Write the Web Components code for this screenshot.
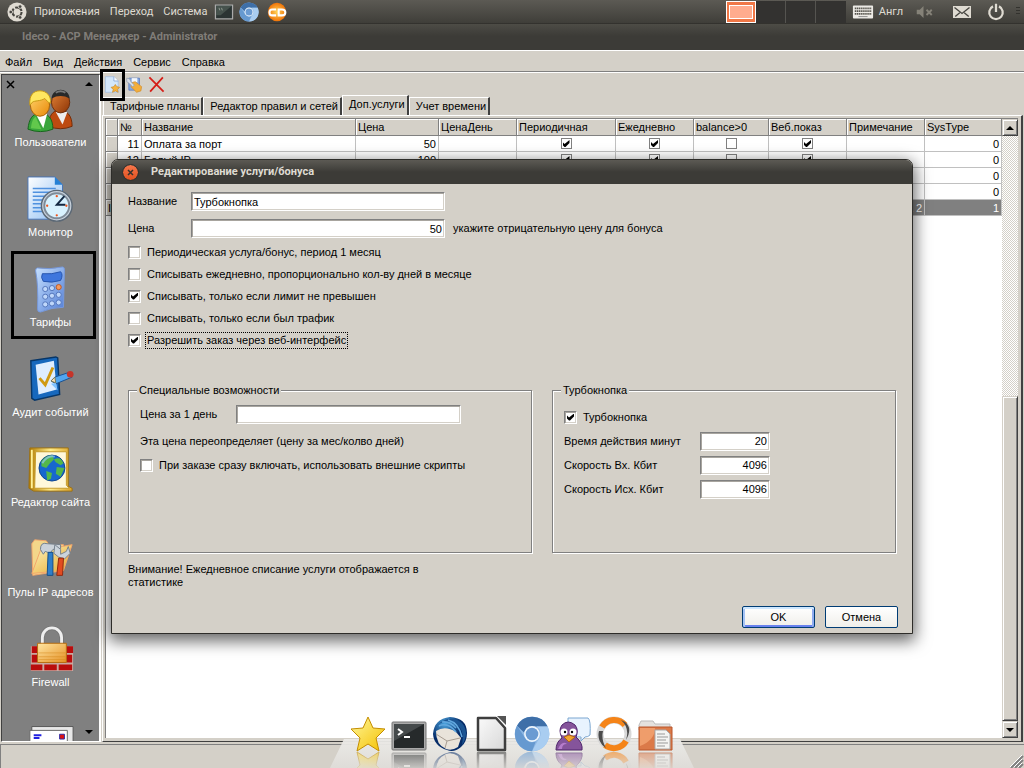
<!DOCTYPE html>
<html lang="ru">
<head>
<meta charset="utf-8">
<title>Ideco - ACP Менеджер</title>
<style>
  html, body { height: 100%; }
  body {
    --face: #d4d0c8;
    --shade: #808080;
    --dark: #404040;
    margin: 0;
    position: relative;
    display: flex;
    flex-direction: column;
    overflow: hidden;
    background: var(--face);
    color: #000;
    font: 11px/13px "Liberation Sans", Arial, sans-serif;
  }
  main {
    flex: 1;
    min-height: 0;
    display: flex;
  }
  .work {
    flex: 1;
    min-width: 0;
    display: flex;
    flex-direction: column;
    padding: 0 1px;
  }
</style>
</head>
<body>
  <desktop-panel></desktop-panel>
  <title-bar>Ideco - ACP Менеджер - Administrator</title-bar>
  <menu-bar items="Файл,Вид,Действия,Сервис,Справка"></menu-bar>
  <main>
    <side-bar>
      <side-item icon="users">Пользователи</side-item>
      <side-item icon="monitor">Монитор</side-item>
      <side-item icon="calc" marked>Тарифы</side-item>
      <side-item icon="audit">Аудит событий</side-item>
      <side-item icon="site">Редактор сайта</side-item>
      <side-item icon="tools">Пулы IP адресов</side-item>
      <side-item icon="firewall">Firewall</side-item>
      <side-item icon="mails"></side-item>
    </side-bar>
    <div class="work">
      <tool-bar></tool-bar>
      <tab-strip tabs="Тарифные планы,Редактор правил и сетей,Доп.услуги,Учет времени" active="2"></tab-strip>
      <tab-panel><data-grid></data-grid></tab-panel>
    </div>
  </main>
  <status-bar></status-bar>
  <launcher-dock></launcher-dock>
  <service-dialog></service-dialog>

<script>
const icons = {
  ubuntu: `<circle cx="12" cy="12" r="11.500" fill="#dfdbd2"/><circle cx="12" cy="12" r="5.500" fill="none" stroke="#45443f" stroke-width="2.500" stroke-dasharray="9.500 2"/><g fill="#45443f" stroke="#dfdbd2"><circle cx="4.500" cy="12" r="2.200"/><circle cx="15.700" cy="5.500" r="2.200"/><circle cx="15.700" cy="18.500" r="2.200"/></g>`,
  term: `<rect x="1" y="3" width="22" height="18" fill="#aaa"/><rect x="2.500" y="4.500" width="19" height="15" fill="#2b3433"/><path d="M2.500 4.500h19L8 16H2.500z" fill="#46524d"/><path d="M6 7l1 3M9 7l1 3" stroke="#9aa59a" fill="none"/>`,
  chromium: `<circle cx="12" cy="12" r="11.500" fill="#8fb8e4"/><path d="M2 6.500A11.500 11.500 0 0122.500 7H12a5.500 5.500 0 00-5.300 4z" fill="#3e6fa8"/><path d="M22.500 7A11.500 11.500 0 0112 23.500l4.800-8.700A5.500 5.500 0 0015 7z" fill="#a9cdf1"/><path d="M2 6.500A11.500 11.500 0 0012 23.500l2.500-6.500A5.500 5.500 0 017 14z" fill="#6699d0"/><circle cx="12" cy="12" r="5.300" fill="#eef5fc"/><circle cx="12" cy="12" r="4.200" fill="#6b9bd2"/>`,
  cd: `<defs><radialGradient id="g"><stop offset="0" stop-color="#ffd45a"/><stop offset="1" stop-color="#f07408"/></radialGradient></defs><circle cx="12" cy="12" r="11" fill="url(#g)"/><path d="M11 9H6q-3 0-3 3.500T6 16h5M14 9h4q4 0 4 3.500T18 16h-4z" fill="none" stroke="#fff" stroke-width="2.500"/>`,
  keyboard: `<rect x="1" y="5" width="22" height="14" rx="1" fill="#eceae5"/><path d="M3 8h18M3 11h18M3 14h18" stroke="#55534c" stroke-width="2" stroke-dasharray="1.500 .6"/><path d="M7 17h10" stroke="#888"/>`,
  sound: `<path d="M1 9h4l5-5v16l-5-5H1z" fill="#858278"/><path d="M14 9l7 7m0-7l-7 7" stroke="#858278" stroke-width="2.500"/>`,
  mail: `<path d="M0 4h24v16H0z" fill="#dfdbd2"/><path d="M2 6l10 8 10-8M3 18l6-5m12 5l-6-5" fill="none" stroke="#45443f" stroke-width="1.800"/>`,
  power: `<path d="M8 4.500a9 9 0 108 0" fill="none" stroke="#dfdbd2" stroke-width="3"/><path d="M12 1v11" stroke="#dfdbd2" stroke-width="3"/>`,
  users: `<defs><linearGradient id="a" x2="1" y2="1"><stop stop-color="#ffd36b"/><stop offset="1" stop-color="#e88908"/></linearGradient><linearGradient id="b" x2="1" y2="1"><stop stop-color="#e08138"/><stop offset="1" stop-color="#8d3405"/></linearGradient></defs>
    <path d="M22 42c1-12 5-16 11-17 9 0 14 6 14 17q-12 5-25 0z" fill="#bd4a10" stroke="#732a05"/><path d="M30 27h12l-5 13z" fill="#eee"/><ellipse cx="35" cy="17" rx="9.500" ry="11" fill="url(#b)" stroke="#6b2a07"/><path d="M25.500 13C27 1 43 1 44.500 13q-9.500-5-19 0z" fill="#292929"/><path d="M30 7q5-3 10 0" stroke="#777" stroke-width="2" fill="none"/>
    <path d="M1 45c1-11 5-16 12-17 9 0 14 6 14 17q-13 5-26 0z" fill="#39a53c" stroke="#146319"/><path d="M9 29h12l-4 15z" fill="#fff"/><path d="M4 44c1-7 2-10 5-12l6 13z" fill="#62c84c"/><ellipse cx="13.500" cy="20" rx="10" ry="11.500" fill="url(#a)" stroke="#a86105"/><path d="M3 20C2 9 7 5 13.500 5s12 5 11 13c-3-1-4-3-6-5-4 3-11 2-13 4z" fill="#ffe760" stroke="#c49712"/>`,
  monitor: `<defs><linearGradient id="a" x2="1" y2="1"><stop stop-color="#fff"/><stop offset="1" stop-color="#8cbdf3"/></linearGradient></defs><path d="M1 1h28l8 8v36H1z" fill="url(#a)" stroke="#4774b5"/><path d="M29 1v8h8z" fill="#2580d5"/><path d="M6 13h24M6 17h18M6 21h15M6 25h12M6 29h12M6 33h14M6 37h14" stroke="#4f91df" stroke-width="1.500"/><circle cx="31" cy="31" r="16" fill="#c7d1dc" stroke="#5b6875" stroke-width="1.500"/><circle cx="31" cy="31" r="13" fill="#d8f2ff" stroke="#7e8b98" stroke-width="2"/><path d="M39 21l-8 9h9" fill="none" stroke="#142943" stroke-width="2"/><g fill="#f0551c"><circle cx="31" cy="21" r="1.200"/><circle cx="31" cy="41" r="1.200"/><circle cx="21" cy="31" r="1.200"/><circle cx="41" cy="31" r="1.200"/></g>`,
  calc: `<defs><linearGradient id="a" x2="1" y2="1"><stop stop-color="#c7e1ff"/><stop offset="1" stop-color="#527ed5"/></linearGradient></defs><path d="M11 2q13 2 26-1 2 0 2 3l-1 39q-12 0-24 5-3 0-3-3Q12 20 9 5q0-3 2-3z" fill="url(#a)" stroke="#7699dc"/><path d="M16 8q10 1 19-2 3 3 0 9-9 3-18 1-3-4-1-8z" fill="#3e76dd" stroke="#2453ac"/><g fill="#bfd7fa" stroke="#5274ba"><circle cx="19" cy="24" r="2.700"/><circle cx="26" cy="23" r="2.700"/><circle cx="19" cy="32" r="2.700"/><circle cx="26" cy="31" r="2.700"/><circle cx="33" cy="30" r="2.700"/><circle cx="19" cy="40" r="2.700"/><circle cx="26" cy="39" r="2.700"/><circle cx="33" cy="38" r="2.700"/></g><circle cx="33" cy="22" r="2.700" fill="#f69a5c" stroke="#b95928"/>`,
  audit: `<path d="M4 5l26-4 2 1 2 38-26 6-3-2z" fill="#1768bd" stroke="#083667" stroke-width="1.500"/><path d="M9 9l19-4 3 30-19 5z" fill="#deedff"/><path d="M13 23l6 7 8-18" fill="none" stroke="#d09a12" stroke-width="3"/><path d="M25 26l4-4 15-5 3 5-17 7z" fill="#51a5ef" stroke="#174f91"/><path d="M25 26l4-4 1 6z" fill="#f9ddb2" stroke="#775"/><circle cx="45" cy="19" r="3.500" fill="#c63429"/><path d="M25 29l7 7-2-8z" fill="#7dc1ff"/>`,
  site: `<defs><linearGradient id="a" x2="1"><stop stop-color="#b17a00"/><stop offset=".5" stop-color="#ffed8b"/><stop offset="1" stop-color="#dba32b"/></linearGradient></defs><path d="M3 2h40v40l4 2v3H7l-5-3z" fill="url(#a)" stroke="#9c7011"/><path d="M9 6h32v35l3 3H8z" fill="#fff8da" stroke="#c59b2b"/><path d="M5 4v40" stroke="#fff198" stroke-width="2"/><circle cx="26" cy="23" r="13.500" fill="#1767ce" stroke="#0d438f"/><path d="M15 16q5-7 12-6l1 4-4 4-4 5-5-2zM28 14q7-4 10 4l-3 2-5-3zM20 26l6 2-1 6-4 2zM31 22l8 1-4 9-5-3z" fill="#54b74a"/><path d="M16 18q5-9 13-7" stroke="#93c8fa" fill="none" stroke-width="2" opacity=".7"/>`,
  tools: `<defs><linearGradient id="a" x2="1" y2="1"><stop stop-color="#fff4c1"/><stop offset="1" stop-color="#e5a929"/></linearGradient></defs><path d="M5 8l3-4 12 1 3 4h15v27L6 41z" fill="#f3d68a" stroke="#f1a46a"/><path d="M5 39l9-24 33-6-9 27z" fill="url(#a)" stroke="#f1a46a"/><path d="M14 14q0-8 7-6l14 1v4l-8 1-3 4-5-2-2 3z" fill="#cbd2d9" stroke="#707e8d"/><path d="M22 17h5v24h-6z" fill="#2f7fc9" stroke="#134c87"/><path d="M29 9l6 5v5l6-3 2-5 2 7-6 6-6-2-5-4z" fill="#cbd4dc" stroke="#75818c"/><path d="M33 23h5l-1 18h-6z" fill="#e24b20" stroke="#8e270d"/>`,
  firewall: `<defs><linearGradient id="a" x2="1" y2="1"><stop stop-color="#ffe6a3"/><stop offset="1" stop-color="#e59125"/></linearGradient></defs><path d="M4 21h44v26H4z" fill="#c9a8a0"/><g fill="#b90d0d"><path d="M5 21h6v7H5zM41 21h7v7h-7zM5 30h6v8H5zM41 30h6v8h-6zM4 40h12v6H4zM18 40h13v6H18zM33 40h14v6H33z"/></g><path d="M16 20V12a10 10 0 0120 0v8" fill="none" stroke="#777" stroke-width="5"/><path d="M16 20V12a10 10 0 0120 0v8" fill="none" stroke="#eee" stroke-width="3"/><path d="M11 18h30v20H11z" fill="url(#a)" stroke="#b66b0d"/><path d="M12 28h28M12 32h28M12 35h28" stroke="#d48719" opacity=".5"/>`,
  mails: `<path d="M5 11h43v30H5z" fill="#e8e8e8" stroke="#555"/><path d="M3 15h39v30H3z" fill="#fff" stroke="#666"/><path d="M7 20h8M7 23h6" stroke="#2020df" stroke-width="2"/><path d="M34 19h5v5h-5z" fill="#d11" stroke="#2a2aaa"/>`,
  add: `<path d="M2 1h12l6 6v16H2z" fill="#d3e7fb" stroke="#9fbce6"/><path d="M14 1v6h6" fill="#fff" stroke="#7198d0"/><path d="M16 12l2 3 4 1-3 3 1 4-4-2-4 2 1-4-3-3 4-1z" fill="#f5b23e" stroke="#c98a28"/>`,
  edit: `<path d="M4 3h15v17H4z" fill="#84a9e2" stroke="#4f72bb"/><path d="M8 3h8v6H8z" fill="#f4f7fc"/><path d="M9 9l4-1 9 7-1 6-6 2-8-8z" fill="#f3ae3b" stroke="#d18c2c"/><path d="M1 3l4 1 2 4 5 5-3 2-5-5-3-2z" fill="#d8dde5" stroke="#8d9aad"/>`,
  remove: `<path d="M2 2l20 20M21 2L3 22" stroke="#d51e18" stroke-width="2.500"/>`,
  star: `<defs><linearGradient id="g" y2="1"><stop stop-color="#fff79b"/><stop offset="1" stop-color="#f4c000"/></linearGradient></defs><path d="M18 1l5 11 12 1-9 9 3 13-11-7-11 7 3-13L1 13l12-1z" fill="url(#g)" stroke="#c38d00"/>`,
  shell: `<rect x="1" y="6" width="34" height="28" rx="1" fill="#aaa" stroke="#777"/><rect x="3" y="8" width="30" height="24" fill="#262a2b"/><path d="M3 8h30L3 25z" fill="#454a4b"/><path d="M7 13l4 3-4 3M13 21h6" fill="none" stroke="#fff" stroke-width="2"/>`,
  bird: `<defs><radialGradient id="g" cx=".35" cy=".2"><stop stop-color="#4ba3dd"/><stop offset="1" stop-color="#052b68"/></radialGradient></defs><path d="M18 1q17 1 17 16 0 9-6 14-7 6-14 3Q2 30 1 18 2 3 18 1z" fill="url(#g)"/><path d="M4 15q9-6 20 1l5 6-3 9q-6 4-12 2Q4 29 4 15z" fill="#e9e3da"/><path d="M4 18l11 7 13-3M15 25l-2 7" fill="none" stroke="#a89d92"/><path d="M2 14Q10 1 24 8q9 6 6 21 8-12 0-22Q14-4 2 14z" fill="#1c5593"/><path d="M7 10q9-4 17 6m-8-12q11 3 14 17M10 6q8-1 14 6" fill="none" stroke="#62a8df" stroke-width="1.500"/>`,
  sheet: `<defs><linearGradient id="g" y2="1"><stop stop-color="#fafafa"/><stop offset="1" stop-color="#d8d8d8"/></linearGradient></defs><path d="M5 2h18l9 10v22H5z" fill="url(#g)" stroke="#3e3e3e" stroke-width="2.500" stroke-linejoin="round"/><path d="M24 0h9v9z" fill="#555"/>`,
  pidgin: `<path d="M13 2h20q3 2 2 17-2 2-5 2l-4 4v-4H13z" fill="#e8f3fe" stroke="#7ba6d0"/><path d="M1 34q0-8 6-12-4-8 0-13 6-6 13 0 4 5 1 12 7 6 6 13z" fill="#85549b" stroke="#4f246b"/><circle cx="9" cy="16" r="3.500" fill="#fff"/><circle cx="18" cy="16" r="3.500" fill="#fff"/><circle cx="10" cy="16" r="1.200"/><circle cx="17" cy="16" r="1.200"/><path d="M9 21l5-2 6 2-6 5z" fill="#f3a22e" stroke="#ad6712"/><path d="M3 33q4-9 9-5-5 0-5 5z" fill="#b57ccb"/>`,
  ring: `<circle cx="18" cy="18" r="14" fill="none" stroke="#d8d8d8" stroke-width="7"/><path d="M6 11A14 14 0 0129 9M30 25A14 14 0 019 29" fill="none" stroke="#f58418" stroke-width="6"/><path d="M3 15a15 15 0 007 17q-5-8-3-17zM25 4q9 8 5 20 7-12-1-18z" fill="#4b4b4b"/>`,
  folder: `<path d="M2 9l2-4h12l2 3h15v6H2z" fill="#e4e1de" stroke="#bbb"/><path d="M2 11h33v23H2z" fill="#db7a49" stroke="#b9572c"/><path d="M3 12h15q0 12-15 18z" fill="#ef9d6b"/><path d="M18 14h11l4 4v15H18z" fill="#f4f4f2" stroke="#aaa"/><path d="M20 18h8M20 21h11M20 24h9M20 27h11M20 30h8" stroke="#999"/>`,
};

const buttonReset = `
  button {
    border: 0;
    padding: 0;
    background: none;
    color: inherit;
    font: inherit;
  }
`;

const define = (name, render) => {
  customElements.define(name, class extends HTMLElement {
    constructor() {
      super();
      this.attachShadow({ mode: "open" });
    }

    connectedCallback() {
      this.shadowRoot.innerHTML = render(this);
    }
  });
};

const list = (el, name) => el.getAttribute(name).split(",");

define("svg-icon", (el) => `
  <style>
    :host { display: block; flex: none; width: var(--icon, 20px); height: var(--icon, 20px); }
    svg { display: block; width: 100%; height: 100%; }
  </style>
  <svg viewBox="0 0 ${el.getAttribute("box") || 24} ${el.getAttribute("box") || 24}" aria-hidden="true">${icons[el.getAttribute("name")]}</svg>
`);

define("desktop-panel", () => `
  <style>
    ${buttonReset}
    :host {
      box-sizing: border-box;
      height: 24px;
      display: flex;
      justify-content: space-between;
      background: linear-gradient(#5c5a54, #3f3e39);
      border-bottom: 1px solid #33322e;
      color: #dfdbd2;
      font: 11px/22px Roboto, "Noto Sans", sans-serif;
    }
    div { display: flex; align-items: center; }
    nav { display: flex; gap: 10px; padding: 0 7px; }
    .left { padding-left: 7px; }
    .apps { gap: 5px; }
    .apps svg-icon:last-child { margin-left: 3px; }
    .spaces { height: 22px; margin-right: 6px; background: #333230; }
    .spaces i { box-sizing: border-box; width: 30px; height: 22px; border-right: 1px solid #555450; }
    .spaces i:first-child { border: 1px solid #fff; background: #f07746; padding: 3px 2px; }
    .spaces i:first-child::before { content: ""; display: block; height: 12px; border: 1px solid #fff; background: #ffac8e; }
    .spaces i:last-child { border: 0; }
    .lang { margin: 0 13px 0 5px; }
    .tray { padding-right: 4px; }
    .tray svg-icon { --icon: 18px; }
    .tray .key { --icon: 22px; }
    .power { margin: 0 11px 0 16px; }
    .mail { margin-left: 19px; }
    .grip { width: 4px; height: 9px; background: repeating-linear-gradient(#33322e 0 1px, transparent 1px 3px); }
  </style>
  <div class="left">
    <svg-icon name="ubuntu"></svg-icon>
    <nav><button>Приложения</button><button>Переход</button><button>Система</button></nav>
    <div class="apps">
      <svg-icon name="term"></svg-icon><svg-icon name="chromium"></svg-icon><svg-icon name="cd"></svg-icon>
    </div>
  </div>
  <div class="tray">
    <div class="spaces"><i></i><i></i><i></i><i></i></div>
    <svg-icon class="key" name="keyboard"></svg-icon><span class="lang">Англ</span>
    <svg-icon name="sound"></svg-icon><svg-icon class="mail" name="mail"></svg-icon>
    <svg-icon class="power" name="power"></svg-icon><span class="grip"></span>
  </div>
`);

define("title-bar", () => `
  <style>
    :host {
      box-sizing: border-box;
      display: block;
      height: 27px;
      padding-left: 22px;
      background: linear-gradient(#4d4c46, #3c3b37 12px);
      border-bottom: 1px solid #fff;
      color: #807d78;
      font: bold 11px/25px Roboto, "Noto Sans", sans-serif;
    }
  </style>
  <slot></slot>
`);

define("menu-bar", (el) => `
  <style>
    ${buttonReset}
    :host {
      box-sizing: border-box;
      height: 22px;
      display: flex;
      gap: 11px;
      padding: 1px 5px 0;
      border-bottom: 1px solid #fff;
      box-shadow: inset 0 -1px var(--shade);
    }
  </style>
  ${list(el, "items").map((item) => `<button>${item}</button>`).join("")}
`);

define("side-bar", () => `
  <style>
    ${buttonReset}
    :host {
      box-sizing: border-box;
      position: relative;
      display: flex;
      flex-direction: column;
      flex: none;
      width: 100px;
      margin: 1px 0 0 1px;
      padding-top: 11px;
      overflow: hidden;
      background: var(--shade);
      border: solid;
      border-width: 1px 2px 1px 1px;
      border-color: var(--dark) #fff #fff var(--dark);
      color: #fff;
    }
    button { position: absolute; width: 10px; height: 10px; color: #000; }
    svg { display: block; }
    .close { left: 4px; top: 5px; }
    .up { right: 5px; top: 4px; }
    .down { right: 5px; bottom: 4px; }
  </style>
  <slot></slot>
  <button class="close" aria-label="Закрыть"><svg width="10" height="10"><path d="M1 1l7 7m0-7L1 8" stroke="currentColor" stroke-width="1.500"/></svg></button>
  <button class="up" aria-label="Вверх"><svg width="10" height="10"><path d="M1 7l4-4 4 4z"/></svg></button>
  <button class="down" aria-label="Вниз"><svg width="10" height="10"><path d="M1 3l4 4 4-4z"/></svg></button>
`);

define("side-item", (el) => `
  <style>
    ${buttonReset}
    :host { position: relative; flex: none; height: 90px; --icon: 48px; }
    button { display: grid; justify-items: center; width: 100%; line-height: 16px; white-space: nowrap; }
    :host([marked])::after {
      content: "";
      position: absolute;
      inset: -15px 3px 17px 9px;
      border: 3px solid #000;
    }
  </style>
  <button><svg-icon name="${el.getAttribute("icon")}" box="50"></svg-icon><slot></slot></button>
`);

define("tool-bar", () => `
  <style>
    ${buttonReset}
    :host { display: flex; gap: 5px; height: 23px; padding-left: 2px; --icon: 17px; }
    button { position: relative; display: flex; align-items: center; }
    .marked::after {
      content: "";
      position: absolute;
      z-index: 1;
      inset: -4px -4px;
      height: 26px;
      border: 3px solid #000;
    }
  </style>
  <button class="marked" aria-label="Добавить"><svg-icon name="add"></svg-icon></button>
  <button aria-label="Изменить"><svg-icon name="edit"></svg-icon></button>
  <button aria-label="Удалить"><svg-icon name="remove"></svg-icon></button>
`);

define("tab-strip", (el) => `
  <style>
    ${buttonReset}
    :host { display: flex; align-items: flex-end; height: 19px; padding-left: 1px; }
    button {
      box-sizing: border-box;
      height: 18px;
      padding: 0 2px 0 6px;
      border: solid;
      border-width: 1px 2px 0 1px;
      border-color: #fff var(--dark) #fff #fff;
      white-space: nowrap;
    }
    [aria-selected="true"] {
      height: 21px;
      margin-bottom: -1px;
      padding-bottom: 3px;
      background: var(--face);
    }
  </style>
  ${list(el, "tabs").map((tab, i) => `<button role="tab" aria-selected="${i == el.getAttribute("active")}">${tab}</button>`).join("")}
`);

define("tab-panel", () => `
  <style>
    :host {
      flex: 1;
      min-height: 0;
      display: flex;
      padding: 2px 3px 3px 2px;
      border: solid;
      border-width: 1px 2px 1px 1px;
      border-color: #fff var(--dark) var(--dark) #fff;
    }
  </style>
  <slot></slot>
`);

// [title, column width]; the last column takes what is left
const columns = [
  ["", 12], ["№", 24], ["Название", 214], ["Цена", 83], ["ЦенаДень", 78], ["Периодичная", 99],
  ["Ежедневно", 78], ["balance>0", 75], ["Веб.показ", 78], ["Примечание", 78], ["SysType", 0],
];
const rows = [
  ["", "11", "Оплата за порт", "50", "", true, true, false, true, "", "0"],
  ["", "12", "Белый IP", "100", "", true, true, false, true, "", "0"],
  ["", "", "", "", "", "", "", "", "", "", "0"],
  ["", "", "", "", "", "", "", "", "", "", "0"],
  ["I", "", "", "", "", "", "", "", "", "а 2", "1"],
];
const cell = (value) => typeof value === "boolean"
  ? `<td class="tick"><input type="checkbox" aria-label="Флаг"${value ? " checked" : ""}></td>`
  : `<td>${value}</td>`;

// seven pixel check mark
const tick = `
  input[type="checkbox"] {
    appearance: none;
    box-sizing: border-box;
    flex: none;
    display: inline-grid;
    place-content: center;
    margin: 0;
    background: #fff;
  }
  input[type="checkbox"]:checked::before {
    content: "";
    width: 7px;
    height: 7px;
    background: #000;
    clip-path: polygon(0 2px, 2px 4px, 7px 0, 7px 3px, 3px 7px, 2px 7px, 0 5px);
  }
`;

define("data-grid", () => `
  <style>
    ${buttonReset}
    ${tick}
    :host {
      flex: 1;
      min-width: 0;
      display: flex;
      background: #fff;
      border: solid var(--shade);
      border-width: 1px 0 0 1px;
    }
    .body { flex: 1; min-width: 0; overflow: hidden; }
    table { width: 100%; table-layout: fixed; border-spacing: 0; }
    th, td {
      box-sizing: border-box;
      height: 16px;
      padding: 0 2px;
      line-height: 14px;
      white-space: nowrap;
      overflow: hidden;
      font-weight: normal;
      text-align: left;
      border: solid #c0c0c0;
      border-width: 0 1px 1px 0;
    }
    th, td:first-child {
      background: var(--face);
      border-color: var(--shade);
      box-shadow: inset 1px 1px #fff;
    }
    th { height: 17px; }
    td:nth-child(2), td:nth-child(4), td:nth-child(10), td:nth-child(11) { text-align: right; }
    .tick { text-align: center; line-height: 0; }
    td input { width: 11px; height: 11px; border: 1px solid var(--shade); }
    tr:last-child td:not(:first-child) { background: var(--shade); color: #fff; }
    .scroll {
      width: 16px;
      display: flex;
      flex-direction: column;
      background: repeating-conic-gradient(var(--face) 0 25%, #fff 0 50%) 0 0 / 2px 2px;
    }
    .scroll button, .thumb {
      box-sizing: border-box;
      background: var(--face);
      border: 1px solid;
      border-color: var(--face) var(--dark) var(--dark) var(--face);
      box-shadow: inset 1px 1px #fff, inset -1px -1px var(--shade);
    }
    .scroll button { height: 17px; display: grid; place-content: center; }
    .track { flex: 261; }
    .thumb { flex: 325; }
  </style>
  <div class="body">
    <table>
      <colgroup>${columns.map(([, width]) => `<col${width ? ` style="width: ${width}px"` : ""}>`).join("")}</colgroup>
      <thead><tr>${columns.map(([title]) => `<th>${title}</th>`).join("")}</tr></thead>
      <tbody>${rows.map((row) => `<tr>${row.map(cell).join("")}</tr>`).join("")}</tbody>
    </table>
  </div>
  <div class="scroll">
    <button aria-label="Вверх"><svg width="8" height="6"><path d="M0 5l4-4 4 4z"/></svg></button>
    <div class="track"></div>
    <div class="thumb"></div>
    <button aria-label="Вниз"><svg width="8" height="6"><path d="M0 1l4 4 4-4z"/></svg></button>
  </div>
`);

define("status-bar", () => `
  <style>
    :host {
      box-sizing: border-box;
      height: 26px;
      display: flex;
      padding-top: 2px;
    }
    div {
      flex: 1;
      display: flex;
      align-items: flex-end;
      justify-content: flex-end;
      border-top: 1px solid var(--shade);
      border-left: 1px solid var(--shade);
    }
  </style>
  <div><svg width="14" height="13"><path d="M1 13L13 1M5 13l8-8M9 13l4-4" stroke="#808080" stroke-width="2"/><path d="M0 12L12 0M4 12l8-8M8 12l4-4" stroke="#fff"/></svg></div>
`);

define("launcher-dock", () => `
  <style>
    ${buttonReset}
    :host {
      position: absolute;
      bottom: 0;
      left: 50%;
      transform: translateX(-50%);
      box-sizing: border-box;
      display: flex;
      justify-content: center;
      gap: 5px;
      width: 364px;
      padding-right: 2px;
      height: 52px;
      overflow: hidden;
    }
    :host::before {
      content: "";
      position: absolute;
      inset: 23px 0 0;
      background: linear-gradient(#ecebe8f0, #dfddd9f0);
      clip-path: polygon(14px 0, calc(100% - 14px) 0, 100% 100%, 0 100%);
    }
    button { position: relative; height: 36px; --icon: 36px; -webkit-box-reflect: below -1px linear-gradient(transparent 40%, #0009); }
  </style>
  ${["star", "shell", "bird", "sheet", "chromium", "pidgin", "ring", "folder"].map((name) => `
    <button aria-label="${name}"><svg-icon name="${name}" box="${name === "chromium" ? 24 : 36}"></svg-icon></button>`).join("")}
`);

define("text-field", (el) => `
  <style>
    :host { display: flex; align-items: center; gap: 8px; }
    label { flex: none; width: var(--label, 55px); white-space: nowrap; }
    input {
      box-sizing: border-box;
      width: var(--field, 254px);
      height: 19px;
      margin: 0;
      padding: 0 2px;
      border: 1px solid;
      border-color: var(--shade) #fff #fff var(--shade);
      box-shadow: inset 1px 1px #a8a59f, inset -1px -1px var(--face);
      background: #fff;
      color: inherit;
      font: inherit;
      outline: 0;
    }
    :host([number]) input { text-align: right; }
  </style>
  <label for="field">${el.getAttribute("label")}</label>
  <input id="field" value="${el.getAttribute("value") || ""}">
  <slot></slot>
`);

define("check-box", (el) => `
  <style>
    ${tick}
    :host { display: flex; align-items: center; gap: 5px; height: 22px; }
    input {
      width: 13px;
      height: 13px;
      border: 1px solid;
      border-color: var(--shade) #fff #fff var(--shade);
      box-shadow: inset 1px 1px #a8a59f, inset -1px -1px var(--face);
    }
    label { padding: 1px; white-space: nowrap; }
    :host([focused]) label { outline: 1px dotted #000; }
  </style>
  <input type="checkbox" id="box"${el.hasAttribute("checked") ? " checked" : ""}>
  <label for="box"><slot></slot></label>
`);

define("group-box", (el) => `
  <style>
    fieldset {
      box-sizing: border-box;
      height: 100%;
      min-width: 0;
      margin: 0;
      padding: 5px 11px;
      border: 1px solid var(--shade);
      box-shadow: 1px 1px #fff, inset 1px 1px #fff;
    }
    legend { position: relative; margin-left: -3px; padding: 0 2px; background: var(--face); }
  </style>
  <fieldset><legend>${el.getAttribute("title-text")}</legend><slot></slot></fieldset>
`);

define("push-button", () => `
  <style>
    button {
      box-sizing: border-box;
      width: 73px;
      height: 22px;
      padding: 0;
      border: 1px solid #003c74;
      border-radius: 2px;
      background: linear-gradient(#fff, #f0efea);
      color: inherit;
      font: inherit;
    }
    :host([default]) button {
      box-shadow: inset 0 2px #cee7ff, inset 2px 0 #a6c3f5, inset -2px 0 #8fabf0, inset 0 -2px #6982ee;
    }
  </style>
  <button><slot></slot></button>
`);

define("service-dialog", () => `
  <style>
    ${buttonReset}
    :host {
      position: absolute;
      left: 111px;
      top: 159px;
      box-sizing: border-box;
      width: 802px;
      border: 1px solid #2d2c29;
      border-radius: 7px 7px 0 0;
      background: var(--face);
      box-shadow: 0 5px 16px 2px #0009;
    }
    header {
      display: flex;
      align-items: center;
      gap: 13px;
      height: 24px;
      padding-left: 11px;
      border-radius: 6px 6px 0 0;
      background: linear-gradient(#5c5a54, #3c3b37 12px);
      color: #dfdbd2;
      font: bold 11px/24px Roboto, "Noto Sans", sans-serif;
    }
    header button { width: 15px; height: 15px; display: grid; place-content: center; border-radius: 50%; background: linear-gradient(#f7764b, #e0511f); outline: 1px solid #33322e; }
    form { display: flex; flex-direction: column; gap: 8px; padding: 8px 14px 5px 16px; }
    .checks { margin: -5px 0 25px; }
    .groups { display: grid; grid-template-columns: 404fr 344fr; gap: 20px; height: 169px; padding-right: 2px; }
    group-box text-field, .groups check-box, .groups p { height: 24px; }
    .special { --label: 88px; --field: 225px; }
    .turbo { --label: 128px; --field: 70px; padding-top: 3px; }
    p { margin: 0; }
    .groups .hint { height: 27px; line-height: 30px; }
    .note { width: 300px; padding-top: 2px; }
    footer { display: flex; justify-content: flex-end; gap: 10px; padding-top: 9px; }
  </style>
  <header>
    <button aria-label="Закрыть"><svg width="7" height="7"><path d="M1 1l5 5m0-5L1 6" stroke="#33322e" stroke-width="1.500"/></svg></button>
    Редактирование услуги/бонуса
  </header>
  <form onsubmit="return false">
    <text-field label="Название" value="Турбокнопка"></text-field>
    <text-field label="Цена" value="50" number>укажите отрицательную цену для бонуса</text-field>
    <div class="checks">
      <check-box>Периодическая услуга/бонус, период 1 месяц</check-box>
      <check-box>Списывать ежедневно, пропорционально кол-ву дней в месяце</check-box>
      <check-box checked>Списывать, только если лимит не превышен</check-box>
      <check-box>Списывать, только если был трафик</check-box>
      <check-box checked focused>Разрешить заказ через веб-интерфейс</check-box>
    </div>
    <div class="groups">
      <group-box title-text="Специальные возможности">
        <div class="special">
          <text-field label="Цена за 1 день"></text-field>
          <p class="hint">Эта цена переопределяет (цену за мес/колво дней)</p>
          <check-box>При заказе сразу включать, использовать внешние скрипты</check-box>
        </div>
      </group-box>
      <group-box title-text="Турбокнопка">
        <div class="turbo">
          <check-box checked>Турбокнопка</check-box>
          <text-field label="Время действия минут" value="20" number></text-field>
          <text-field label="Скорость Вх. Кбит" value="4096" number></text-field>
          <text-field label="Скорость Исх. Кбит" value="4096" number></text-field>
        </div>
      </group-box>
    </div>
    <p class="note">Внимание! Ежедневное списание услуги отображается в статистике</p>
    <footer>
      <push-button default>OK</push-button>
      <push-button>Отмена</push-button>
    </footer>
  </form>
`);
</script>
</body>
</html>
